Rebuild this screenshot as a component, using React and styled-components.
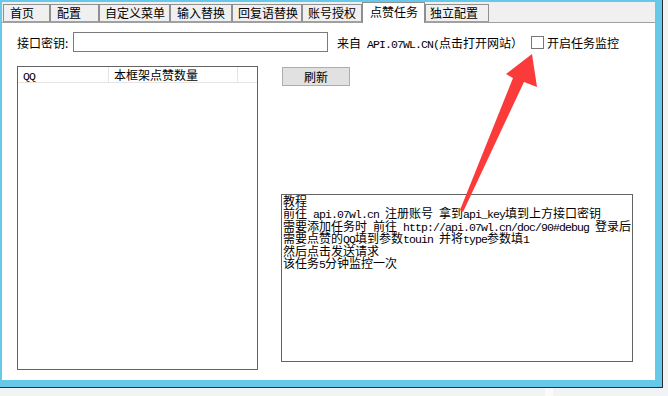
import React from "react";
import styled, { createGlobalStyle } from "styled-components";

const Global = createGlobalStyle`
  html, body { margin: 0; padding: 0; background: #f2f3f7; }
  body { font-family: "Noto Sans CJK SC", "Liberation Sans", sans-serif; font-size: 12px; color: #000; }
`;

const Page = styled.div`
  width: 668px;
  height: 396px;
  display: flex;
  flex-direction: column;
`;

const Frame = styled.div`
  position: relative;
  width: 663px;
  height: 388px;
  box-sizing: border-box;
  background: #66c9ea;
  border-right: 1px solid #2e2e2e;
  border-bottom: 1px solid #2e2e2e;
  padding: 2px 7px 7px 2px;
  display: flex;
`;

const BottomStrip = styled.div`
  flex: 1;
  display: flex;
`;

const StripPart = styled.div`
  width: ${(p) => p.$w}px;
  background: ${(p) => p.$bg};
`;

const Window = styled.div`
  flex: 1;
  background: #fff;
  display: flex;
  flex-direction: column;
`;

const TabStrip = styled.div`
  height: 20px;
  background: #f0f0f0;
  border-bottom: 1px solid #a0a0a0;
  display: flex;
  align-items: flex-end;
  padding-left: 1px;
`;

const Tab = styled.div`
  box-sizing: border-box;
  width: ${(p) => p.$w}px;
  height: ${(p) => (p.$active ? 21 : 18)}px;
  margin-bottom: ${(p) => (p.$active ? -1 : 0)}px;
  background: ${(p) => (p.$active ? "#fff" : "#f0f0f0")};
  border: 1px solid #8f8f8f;
  border-bottom: ${(p) => (p.$active ? "none" : "1px solid #a0a0a0")};
  padding-left: ${(p) => p.$pl}px;
  font-size: 12px;
  line-height: 16px;
  white-space: nowrap;
  ${(p) => (p.$active ? "padding-top: 1px;" : "")}
`;

const Content = styled.div`
  flex: 1;
  padding: 9px 0 0 15px;
  display: flex;
  flex-direction: column;
`;

const KeyRow = styled.div`
  display: flex;
  align-items: center;
  height: 20px;
`;

const Label = styled.span`
  width: 56px;
  font-size: 12px;
  white-space: nowrap;
`;

const KeyInput = styled.div`
  box-sizing: border-box;
  width: 255px;
  height: 20px;
  border: 1px solid #7a7a7a;
  background: #fff;
`;

const LinkText = styled.span`
  margin-left: 9px;
  font-size: 12px;
  white-space: pre;
`;

const Check = styled.span`
  box-sizing: border-box;
  width: 13px;
  height: 13px;
  border: 1px solid #777;
  background: #fff;
  margin-left: 8px;
`;

const CheckLabel = styled.span`
  margin-left: 3px;
  font-size: 12px;
`;

const Lower = styled.div`
  display: flex;
  margin-top: 14px;
`;

const ListBox = styled.div`
  box-sizing: border-box;
  width: 241px;
  height: 304px;
  border: 1px solid #646464;
  background: #fff;
  display: flex;
  flex-direction: column;
`;

const ListHeader = styled.div`
  display: flex;
  height: 16px;
`;

const HeadCell = styled.div`
  box-sizing: border-box;
  width: ${(p) => p.$w}px;
  ${(p) => (p.$grow ? "flex: 1;" : "")}
  border-right: ${(p) => (p.$grow ? "none" : "1px solid #e5e5e5")};
  border-bottom: 1px solid #e5e5e5;
  padding-left: 5px;
  font-size: 12px;
  line-height: 15px;
  white-space: nowrap;
`;

const RightCol = styled.div`
  display: flex;
  flex-direction: column;
  padding-left: 23px;
`;

const Button = styled.div`
  box-sizing: border-box;
  margin-left: 1px;
  margin-top: 1px;
  width: 68px;
  height: 19px;
  background: #e1e1e1;
  border: 1px solid #adadad;
  display: flex;
  align-items: center;
  justify-content: center;
  font-size: 12px;
`;

const Memo = styled.div`
  box-sizing: border-box;
  margin-top: 108px;
  width: 352px;
  height: 168px;
  border: 1px solid #646464;
  background: #fff;
  padding: 0 0 0 1px;
  font-size: 12px;
  line-height: 12.4px;
  white-space: nowrap;
`;

const MemoLine = styled.div`
  height: 12.4px;
`;

const Lat = styled.span`
  font-family: "Liberation Mono", monospace;
  font-size: 11.5px;
  letter-spacing: -0.9px;
  white-space: pre;
`;

const Overlay = styled.svg`
  position: absolute;
  left: 0;
  top: 0;
  pointer-events: none;
`;

const Mixed = ({ text }) =>
  text
    .split(/([\x00-\xff]+)/)
    .map((s, i) =>
      !s ? null : /[\x00-\xff]/.test(s[0]) ? (
        <Lat key={i}>{s}</Lat>
      ) : (
        <span key={i}>{s}</span>
      )
    );

const tabs = [
  { t: "首页", w: 47, pl: 6 },
  { t: "配置", w: 49, pl: 6 },
  { t: "自定义菜单", w: 71, pl: 5 },
  { t: "输入替换", w: 62, pl: 6 },
  { t: "回复语替换", w: 70, pl: 5 },
  { t: "账号授权", w: 60, pl: 5 },
  { t: "点赞任务", w: 63, pl: 7, active: true },
  { t: "独立配置", w: 64, pl: 4 },
];

const memo = [
  "教程",
  "前往 api.07wl.cn 注册账号 拿到api_key填到上方接口密钥",
  "需要添加任务时 前往 http://api.07wl.cn/doc/90#debug 登录后",
  "需要点赞的QQ填到参数touin 并将type参数填1",
  "然后点击发送请求",
  "该任务5分钟监控一次",
];

export default function App() {
  return (
    <Page>
      <Global />
      <Frame>
        <Window>
          <TabStrip>
            {tabs.map((t) => (
              <Tab key={t.t} $w={t.w} $pl={t.pl} $active={t.active}>
                {t.t}
              </Tab>
            ))}
          </TabStrip>
          <Content>
            <KeyRow>
              <Label>接口密钥:</Label>
              <KeyInput />
              <LinkText>
                <Mixed text="来自 API.07WL.CN(点击打开网站）" />
              </LinkText>
              <Check />
              <CheckLabel>开启任务监控</CheckLabel>
            </KeyRow>
            <Lower>
              <ListBox>
                <ListHeader>
                  <HeadCell $w={91}>
                    <Lat>QQ</Lat>
                  </HeadCell>
                  <HeadCell $w={129}>本框架点赞数量</HeadCell>
                  <HeadCell $grow />
                </ListHeader>
              </ListBox>
              <RightCol>
                <Button>刷新</Button>
                <Memo>
                  {memo.map((m, i) => (
                    <MemoLine key={i}>
                      <Mixed text={m} />
                    </MemoLine>
                  ))}
                </Memo>
              </RightCol>
            </Lower>
          </Content>
        </Window>
        <Overlay width="663" height="388" viewBox="0 0 663 388">
          <polygon
            points="532,54 506,74 513,78 460,210 463,212 524,82 537,87"
            fill="#fb3a3a"
          />
        </Overlay>
      </Frame>
      <BottomStrip>
        <StripPart $w={545} $bg="#f2f3f7" />
        <StripPart $w={8} $bg="#fbfbfd" />
        <StripPart $w={115} $bg="#f2f3f7" />
      </BottomStrip>
    </Page>
  );
}
